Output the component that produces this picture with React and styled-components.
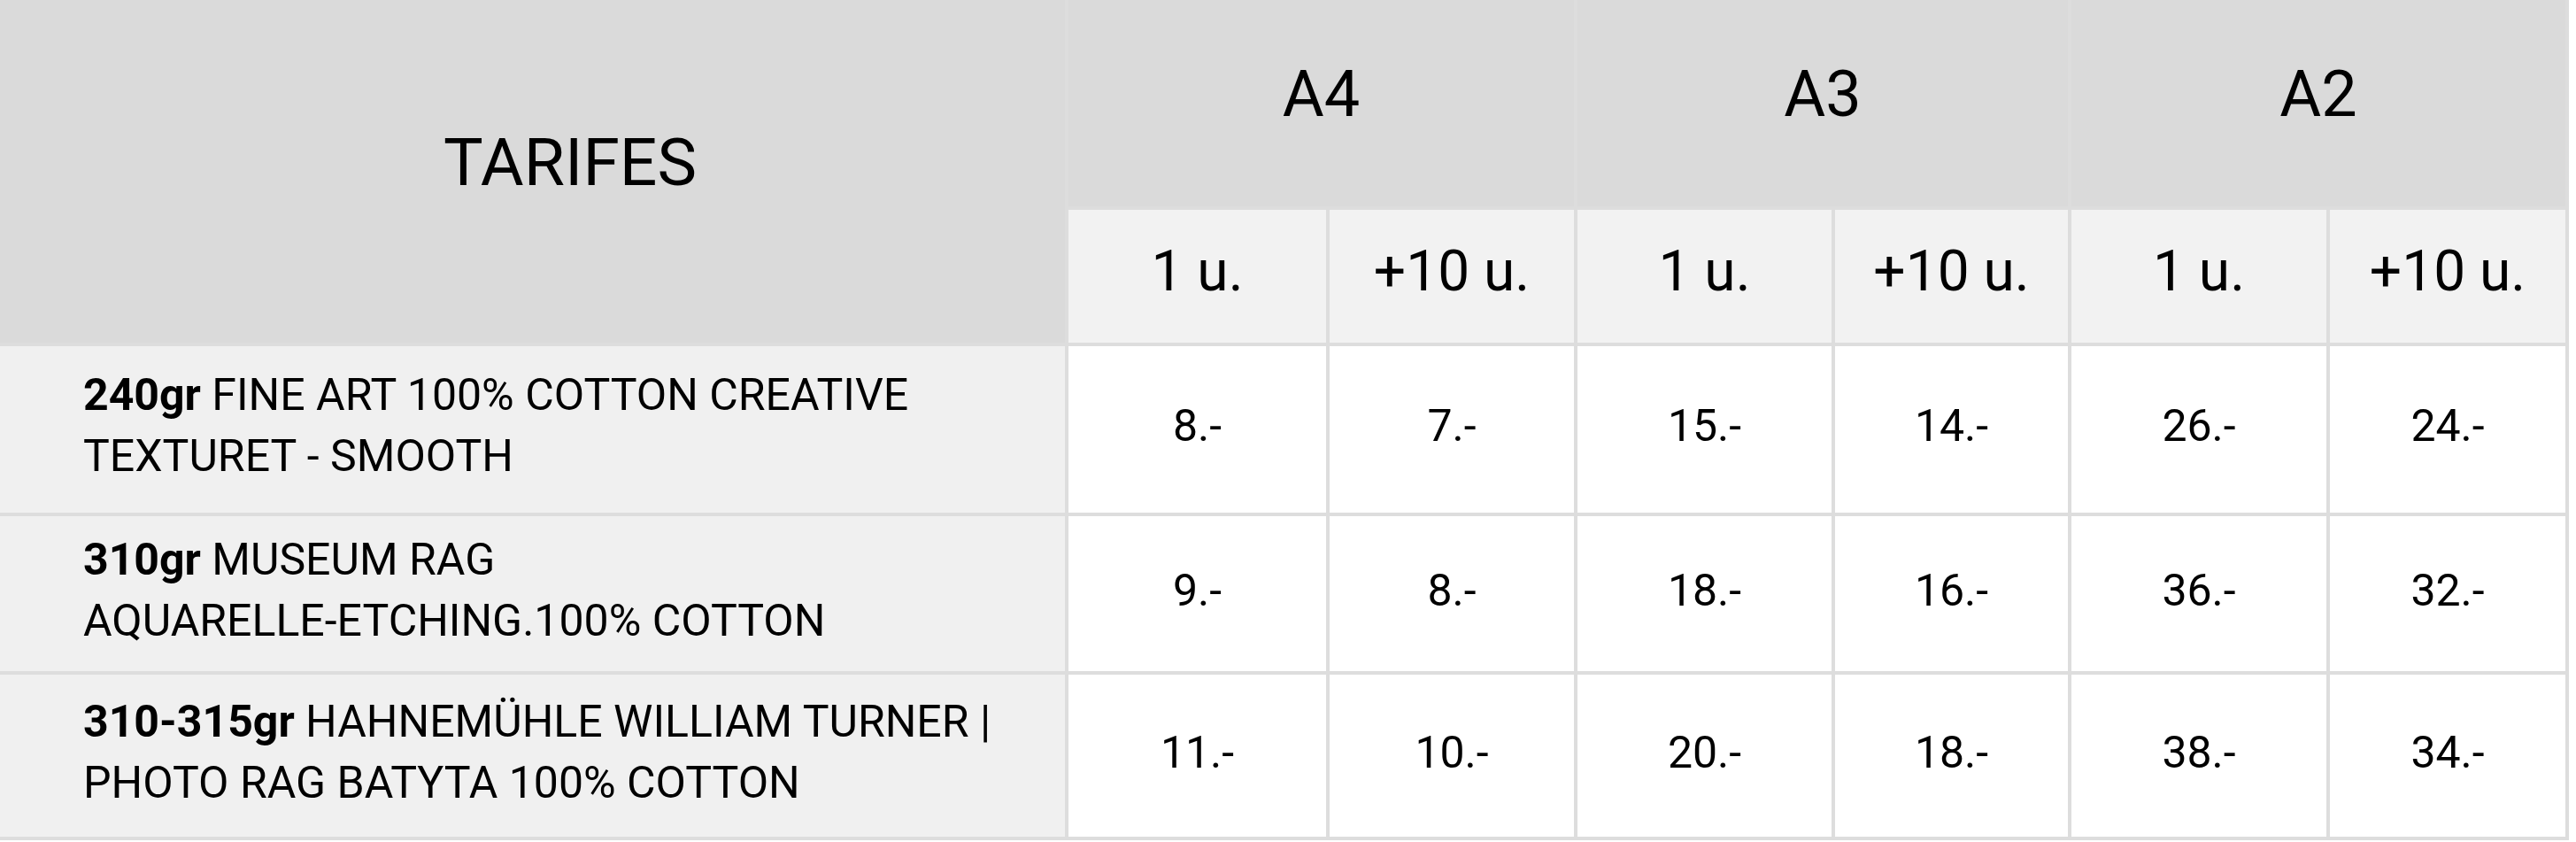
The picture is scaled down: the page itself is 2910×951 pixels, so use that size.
import React from 'react';
import styled, { createGlobalStyle } from 'styled-components';

const GlobalStyle = createGlobalStyle`
  * { box-sizing: border-box; }
  body {
    margin: 0;
    background: #ffffff;
    font-family: Roboto, "Liberation Sans", Arial, sans-serif;
    color: #000;
  }
`;

const Table = styled.div`
  display: grid;
  grid-template-columns: 1203px 291px 276px 287px 263px 288px 266px;
  grid-template-rows: 233px 150px 188px 175px 183px;
  gap: 4px;
  width: 2902px;
  padding: 0 4px 4px 0;
  background: #dddddd;
`;

const Cell = styled.div`
  display: flex;
  align-items: center;
  justify-content: center;
  text-align: center;
  line-height: normal;
`;

const Corner = styled(Cell)`
  grid-row: span 2;
  background: #dadada;
  font-size: 75px;
  padding: 0 0 22px 85px;
`;

const Size = styled(Cell)`
  grid-column: span 2;
  background: #dadada;
  font-size: 72px;
  padding-bottom: 20px;
`;

const Qty = styled(Cell)`
  background: #f2f2f2;
  font-size: 64px;
  padding-bottom: 12px;
`;

const Paper = styled(Cell)`
  justify-content: flex-start;
  text-align: left;
  background: #f0f0f0;
  font-size: 50px;
  line-height: 69px;
  padding: 0 0 8px 94px;

  b { font-weight: 700; }
`;

const Price = styled(Cell)`
  background: #ffffff;
  font-size: 50px;
  padding-bottom: 8px;
`;

const sizes = ['A4', 'A3', 'A2'];

const papers = [
  {
    weight: '240gr',
    lines: ['FINE ART 100% COTTON CREATIVE', 'TEXTURET - SMOOTH'],
    prices: ['8.-', '7.-', '15.-', '14.-', '26.-', '24.-'],
  },
  {
    weight: '310gr',
    lines: ['MUSEUM RAG', 'AQUARELLE-ETCHING.100% COTTON'],
    prices: ['9.-', '8.-', '18.-', '16.-', '36.-', '32.-'],
  },
  {
    weight: '310-315gr',
    lines: ['HAHNEMÜHLE WILLIAM TURNER |', 'PHOTO RAG BATYTA 100% COTTON'],
    prices: ['11.-', '10.-', '20.-', '18.-', '38.-', '34.-'],
  },
];

export default function App() {
  return (
    <>
      <GlobalStyle />
      <Table>
        <Corner>TARIFES</Corner>
        {sizes.map((s) => <Size key={s}>{s}</Size>)}
        {sizes.map((s) => (
          <React.Fragment key={s}>
            <Qty>1 u.</Qty>
            <Qty>+10 u.</Qty>
          </React.Fragment>
        ))}
        {papers.map((p) => (
          <React.Fragment key={p.weight}>
            <Paper>
              <div>
                <b>{p.weight}</b> {p.lines[0]}
                <br />
                {p.lines[1]}
              </div>
            </Paper>
            {p.prices.map((v, i) => <Price key={i}>{v}</Price>)}
          </React.Fragment>
        ))}
      </Table>
    </>
  );
}
